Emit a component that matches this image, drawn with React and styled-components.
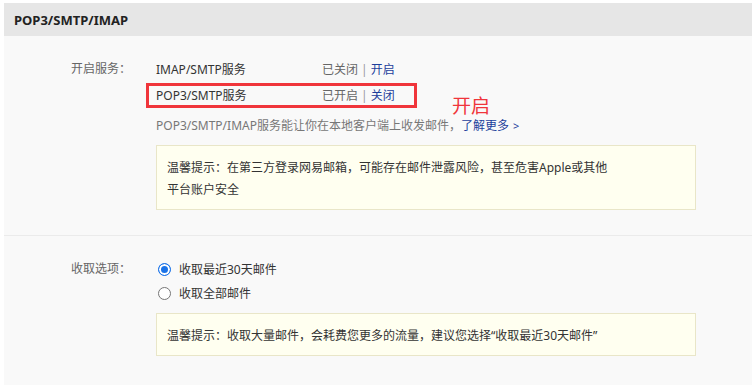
import React from "react";
import styled, { createGlobalStyle } from "styled-components";

const Global = createGlobalStyle`
  html, body { margin: 0; padding: 0; background: #ffffff; }
  body { font-family: "Noto Sans", "Noto Sans CJK SC", sans-serif; font-size: 12px; color: #333; }
`;

const Page = styled.div`
  padding: 3px 1px 0 4px;
`;

const Panel = styled.div`
  background: #f9f9f9;
  min-height: calc(100vh - 3px);
`;

const Header = styled.div`
  height: 33px;
  background: #e6e6e6;
  display: flex;
  align-items: center;
  padding-left: 10px;
  font-size: 13px;
  font-weight: 700;
  color: #222;
`;

const Section = styled.div`
  display: grid;
  grid-template-columns: 127px 1fr;
  column-gap: 25px;
  padding: ${p => p.$pad};
  border-bottom: ${p => (p.$divider ? "1px solid #ebebeb" : "none")};
`;

const Label = styled.div`
  text-align: right;
  color: #666;
  line-height: ${p => p.$lh}px;
`;

const Content = styled.div`
  display: flex;
  flex-direction: column;
  padding-right: 56px;
`;

const ServiceRow = styled.div`
  position: relative;
  display: grid;
  grid-template-columns: 166px auto;
  height: ${p => p.$h}px;
  align-items: center;
  color: #333;
`;

const Status = styled.span`
  color: #666;
`;

const Sep = styled.span`
  color: #999;
  margin: 0 3px;
`;

const Link = styled.a`
  color: #1d3f9c;
  text-decoration: none;
  cursor: pointer;
`;

const Highlight = styled.div`
  position: absolute;
  left: -10px;
  top: 1px;
  width: 271px;
  height: 25px;
  box-sizing: border-box;
  border: 3px solid #f0353b;
  pointer-events: none;
`;

const Annotation = styled.span`
  position: absolute;
  left: 296px;
  top: 13px;
  font-size: 19px;
  line-height: 20px;
  color: #f0353b;
  font-family: "Noto Sans CJK SC", sans-serif;
`;

const Desc = styled.div`
  margin-top: 6px;
  line-height: 24px;
  color: #777;
`;

const Chevron = styled.span`
  font-size: 11px;
  margin-left: 4px;
`;

const Tip = styled.div`
  margin-top: ${p => p.$mt}px;
  background: #fffff0;
  border: 1px solid #e9e6c8;
  padding: ${p => p.$pad};
  line-height: 22px;
  color: #333;
`;

const RadioRow = styled.label`
  display: flex;
  align-items: center;
  height: 24px;
  gap: 8px;
  color: #333;
  cursor: pointer;
`;

const RadioDot = styled.span`
  width: 13px;
  height: 13px;
  margin-left: 2px;
  box-sizing: border-box;
  border-radius: 50%;
  border: ${p => (p.$checked ? "1px solid #1a73e8" : "1px solid #767676")};
  background: ${p => (p.$checked ? "#1a73e8" : "#fff")};
  box-shadow: ${p => (p.$checked ? "inset 0 0 0 2px #fff" : "none")};
  flex: none;
`;

export default function App() {
  return (
    <>
      <Global />
      <Page>
        <Panel>
          <Header>POP3/SMTP/IMAP</Header>
          <Section $pad="20px 0 25px" $divider>
            <Label $lh={26}>开启服务：</Label>
            <Content>
              <ServiceRow $h={26}>
                <span>IMAP/SMTP服务</span>
                <span>
                  <Status>已关闭</Status>
                  <Sep>|</Sep>
                  <Link>开启</Link>
                </span>
              </ServiceRow>
              <ServiceRow $h={26}>
                <span>POP3/SMTP服务</span>
                <span>
                  <Status>已开启</Status>
                  <Sep>|</Sep>
                  <Link>关闭</Link>
                </span>
                <Highlight />
                <Annotation>开启</Annotation>
              </ServiceRow>
              <Desc>
                POP3/SMTP/IMAP服务能让你在本地客户端上收发邮件，
                <Link>
                  了解更多<Chevron>&gt;</Chevron>
                </Link>
              </Desc>
              <Tip $mt={7} $pad="11px 10px 8px">
                温馨提示：在第三方登录网易邮箱，可能存在邮件泄露风险，甚至危害Apple或其他
                <br />
                平台账户安全
              </Tip>
            </Content>
          </Section>
          <Section $pad="21px 0 20px">
            <Label $lh={24}>收取选项：</Label>
            <Content>
              <RadioRow>
                <RadioDot $checked />
                收取最近30天邮件
              </RadioRow>
              <RadioRow>
                <RadioDot />
                收取全部邮件
              </RadioRow>
              <Tip $mt={8} $pad="11px 10px 8px">
                温馨提示：收取大量邮件，会耗费您更多的流量，建议您选择“收取最近30天邮件”
              </Tip>
            </Content>
          </Section>
        </Panel>
      </Page>
    </>
  );
}
